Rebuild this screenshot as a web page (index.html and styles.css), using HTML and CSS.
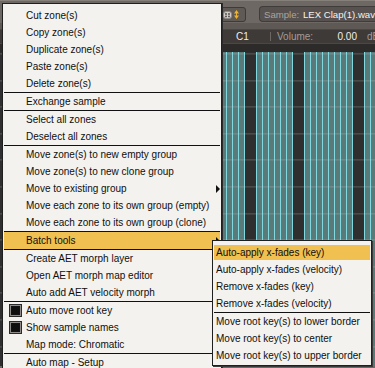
FILE: index.html
```html
<!DOCTYPE html>
<html lang="en">
<head>
  <meta charset="UTF-8">
  <title>Mapping editor - zone menu</title>
  <meta name="viewport" content="width=device-width,initial-scale=1">
  <link rel="stylesheet" href="styles.css">
</head>
<body>
  <div class="app">
    <div class="toolbar">
      <div class="tool-btn">
        <svg class="ico-pad" width="9" height="8" viewBox="0 0 9 8">
          <rect x="0.5" y="0.5" width="8" height="7" rx="2.5" fill="#cfcbc6" stroke="#8d8883"/>
          <circle cx="3" cy="3" r="0.9" fill="#4a4643"/>
          <circle cx="6" cy="3" r="0.9" fill="#4a4643"/>
          <circle cx="3" cy="5.4" r="0.9" fill="#4a4643"/>
          <circle cx="6" cy="5.4" r="0.9" fill="#4a4643"/>
        </svg>
        <svg class="ico-updown" width="5" height="9" viewBox="0 0 5 9">
          <polygon points="0,3.5 2.5,0 5,3.5" fill="#f0b22c"/>
          <rect x="2" y="3" width="1" height="3" fill="#f0b22c"/>
          <polygon points="0,5.5 2.5,9 5,5.5" fill="#f0b22c"/>
        </svg>
      </div>
      <div class="sample-field"><span class="lbl">Sample:</span><span class="val">LEX Clap(1).wav</span></div>
    </div>
    <div class="band"></div>
    <div class="info-row">
      <span class="key">C1</span>
      <span class="vsep"></span>
      <span class="lbl">Volume:</span>
      <span class="num">0.00</span>
      <span class="unit">dB</span>
    </div>
    <div class="ruler"></div>
    <div class="grid">
      <div class="gap lead"></div>
      <div class="zone w55"></div>
      <div class="gap"></div>
      <div class="zone w37"></div>
      <div class="gap"></div>
      <div class="zone w49"></div>
      <div class="gap"></div>
      <div class="zone fill"></div>
    </div>
    <div class="scrollbar"></div>
  </div>

  <div class="menu menu-main">
    <div class="item">Cut zone(s)</div>
    <div class="item">Copy zone(s)</div>
    <div class="item">Duplicate zone(s)</div>
    <div class="item">Paste zone(s)</div>
    <div class="item">Delete zone(s)</div>
    <div class="sep"></div>
    <div class="item">Exchange sample</div>
    <div class="sep"></div>
    <div class="item">Select all zones</div>
    <div class="item">Deselect all zones</div>
    <div class="sep"></div>
    <div class="item">Move zone(s) to new empty group</div>
    <div class="item">Move zone(s) to new clone group</div>
    <div class="item">Move to existing group<span class="arrow"></span></div>
    <div class="item">Move each zone to its own group (empty)</div>
    <div class="item">Move each zone to its own group (clone)</div>
    <div class="sep"></div>
    <div class="item hl">Batch tools<span class="arrow"></span></div>
    <div class="sep"></div>
    <div class="item">Create AET morph layer</div>
    <div class="item">Open AET morph map editor</div>
    <div class="item">Auto add AET velocity morph</div>
    <div class="sep"></div>
    <div class="item checked"><span class="box"></span>Auto move root key</div>
    <div class="item checked"><span class="box"></span>Show sample names</div>
    <div class="item">Map mode: Chromatic</div>
    <div class="sep"></div>
    <div class="item">Auto map - Setup</div>
  </div>

  <div class="menu menu-sub">
    <div class="item hl">Auto-apply x-fades (key)</div>
    <div class="item">Auto-apply x-fades (velocity)</div>
    <div class="item">Remove x-fades (key)</div>
    <div class="item">Remove x-fades (velocity)</div>
    <div class="sep"></div>
    <div class="item">Move root key(s) to lower border</div>
    <div class="item">Move root key(s) to center</div>
    <div class="item">Move root key(s) to upper border</div>
  </div>
</body>
</html>
```

FILE: styles.css
```css
body{margin:0;width:375px;height:368px;overflow:hidden;position:relative;background:#3a3836;font-family:"Liberation Sans",Arial,sans-serif;font-size:10px;}

/* background editor */
.app{display:flex;flex-direction:column;height:368px;overflow:hidden;}
.toolbar{height:17px;padding:5px 0 0 190px;display:flex;align-items:flex-start;background:#6e6864;border-top:1px solid #86807b;}
.tool-btn{box-sizing:border-box;flex:0 0 56px;height:15px;margin-top:1px;display:flex;align-items:center;justify-content:flex-end;gap:2px;padding-right:6px;background:#5f5a56;border:1px solid #3e3a37;border-radius:3px;}
.sample-field{box-sizing:border-box;flex:1;min-width:0;height:16px;margin-left:13px;display:flex;align-items:center;padding-left:4px;background:#57524f;border:1px solid #403c39;border-right:none;border-radius:4px 0 0 4px;white-space:nowrap;overflow:hidden;font-size:9.6px;}
.sample-field .lbl{color:#aaa5a0;width:39px;flex:none;}
.sample-field .val{color:#f4f2ef;}
.band{height:6px;background:#5e5955;border-bottom:1px solid #4a4643;}
.info-row{height:13px;display:flex;align-items:center;padding-left:236px;background:#3d3a38;color:#f1efec;white-space:nowrap;border-bottom:1px solid #4b4745;overflow:hidden;}
.info-row .key{width:34px;flex:none;}
.info-row .vsep{width:1px;height:9px;background:#6c6764;margin-right:6px;flex:none;}
.info-row .lbl{width:50px;color:#a29d99;flex:none;}
.info-row .num{width:30px;text-align:right;flex:none;}
.info-row .unit{margin-left:10px;color:#a29d99;}
.ruler{height:8px;background:#2c2b2a;}
.grid{flex:1;display:flex;position:relative;}
.grid::after{content:"";position:absolute;inset:0;background:repeating-linear-gradient(to bottom,rgba(200,215,215,.28) 0 1px,transparent 1px 26.6px);background-position:0 1.4px;}
.gap{width:11px;flex:none;background:#2f2f2f;}
.gap.lead{width:190px;}
.zone{flex:none;background:repeating-linear-gradient(to right,#82d8df 0 1px,#5a7979 1px 6px);}
.w55{width:55px;}
.w37{width:37px;}
.w49{width:49px;}
.fill{flex:1;}
.scrollbar{height:2px;background:#6d6965;}

/* context menus */
.menu{position:absolute;background:#f3f2ee;border:1px solid #1f1f1f;color:#0f0f0f;}
.menu-main{left:2px;top:3px;width:218px;padding-top:3px;box-shadow:1px 0 0 #2b2b2b;}
.menu-sub{left:212px;top:240px;width:158px;padding:3px 0 1px;box-shadow:1px 1px 0 #3a3a3a;}
.item{height:17px;margin:0 1px;padding-left:22px;display:flex;align-items:center;white-space:nowrap;}
.menu-sub .item{padding-left:2px;}
.item.hl{background:#f0c150;}
.menu-sub .item.hl{background:linear-gradient(#f0c150,#f0c150) 0 1px/100% 15px no-repeat;}
.sep{height:1px;margin:0 1px;background:#111;}
.arrow{margin-left:auto;border-left:4px solid #111;border-top:4px solid transparent;border-bottom:4px solid transparent;}
.item.checked{padding-left:5px;}
.box{box-sizing:border-box;width:13px;height:13px;margin-right:4px;background:#0e0e0e;border:1px solid #2a2a2a;box-shadow:inset 0 0 0 1px #8e8b88,inset 0 0 0 2px #111;}
```
